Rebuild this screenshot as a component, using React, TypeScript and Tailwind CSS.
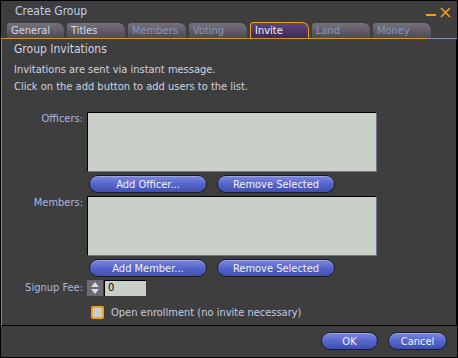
import React from "react";

const font = { fontFamily: '"DejaVu Sans Condensed", "DejaVu Sans", sans-serif' };

type TabProps = { label: string; active?: boolean; dim?: boolean; width: string };

const Tab = ({ label, active, dim, width }: TabProps) => {
  if (active) {
    return (
      <div
        className={`${width} h-[16px] rounded-tl-[3px] rounded-tr-[7px] border border-b-0 border-[#e0a020] bg-gradient-to-b from-[#5e4678] to-[#3e2a58] pl-[4px] text-[11px] leading-[15px] text-[#f0f0f0]`}
      >
        {label}
      </div>
    );
  }
  return (
    <div
      className={`${width} h-[15px] rounded-tl-[3px] rounded-tr-[7px] bg-gradient-to-b from-[#76717c] to-[#4e4a56] pl-[4px] text-[11px] leading-[15px] ${
        dim ? "text-[#8a96b8]" : "text-[#d4d8e4]"
      }`}
    >
      {label}
    </div>
  );
};

const Pill = ({ label, width }: { label: string; width: string }) => (
  <button
    className={`${width} h-[18px] rounded-full border border-[#1c1c28] bg-gradient-to-b from-[#7c88e0] via-[#5666cc] to-[#4050b0] text-center text-[11px] leading-[15px] text-[#f2f2f8] shadow-[inset_0_1px_0_rgba(255,255,255,0.25)]`}
  >
    {label}
  </button>
);

const ListBox = () => (
  <div className="h-[60px] w-[290px] border-l border-t border-black border-r-[#6a7890] border-b-[#6a7890] border-r border-b bg-[#c8d0c8]" />
);

export default function App() {
  return (
    <div style={font} className="h-[358px] w-[458px] overflow-hidden border border-black bg-[#3e3e3e] text-[11px]">
      {/* title bar */}
      <div className="flex h-[20px] items-center justify-between pl-[14px] pr-[6px]">
        <span className="text-[12px] text-[#c4cce8]">Create Group</span>
        <div className="flex items-center gap-[4px] pt-[3px]">
          <svg width="10" height="10" viewBox="0 0 10 10">
            <rect x="0" y="6" width="10" height="2" fill="#f0a020" />
          </svg>
          <svg width="11" height="11" viewBox="0 0 11 11">
            <path d="M1 1 L10 10 M10 1 L1 10" stroke="#f0a020" strokeWidth="1.6" />
          </svg>
        </div>
      </div>

      {/* tabs */}
      <div className="flex h-[17px] items-end gap-[3px] pl-[6px]">
        <Tab label="General" width="w-[57px]" />
        <Tab label="Titles" width="w-[58px]" />
        <Tab label="Members" width="w-[58px]" dim />
        <Tab label="Voting" width="w-[58px]" dim />
        <Tab label="Invite" active width="w-[59px]" />
        <Tab label="Land" width="w-[58px]" dim />
        <Tab label="Money" width="w-[58px]" dim />
      </div>
      <div className="flex h-[1px]">
        <div className="w-[426px] bg-[#d09a28]" />
        <div className="flex-1 bg-[#8a94ac]" />
      </div>

      {/* panel */}
      <div className="flex h-[287px] flex-col border-l border-l-[#7a88a8] border-r border-r-black border-b border-b-black pl-[12px] text-[#d0d4e0]">
        <div className="mt-[1px] text-[12px] leading-[18px]">Group Invitations</div>
        <div className="mt-[3px] leading-[17px]">Invitations are sent via instant message.</div>
        <div className="leading-[17px]">Click on the add button to add users to the list.</div>

        <div className="mt-[17px] flex gap-[4px]">
          <div className="w-[69px] text-right leading-[14px] text-[#aab8e0]">Officers:</div>
          <ListBox />
        </div>
        <div className="mt-[3px] flex gap-[10px] pl-[75px]">
          <Pill label="Add Officer..." width="w-[118px]" />
          <Pill label="Remove Selected" width="w-[118px]" />
        </div>

        <div className="mt-[3px] flex gap-[4px]">
          <div className="w-[69px] text-right leading-[14px] text-[#aab8e0]">Members:</div>
          <ListBox />
        </div>
        <div className="mt-[3px] flex gap-[10px] pl-[75px]">
          <Pill label="Add Member..." width="w-[118px]" />
          <Pill label="Remove Selected" width="w-[118px]" />
        </div>

        <div className="mt-[3px] flex items-center gap-[4px]">
          <div className="w-[69px] text-right text-[#aab8e0]">Signup Fee:</div>
          <div className="flex items-center gap-[1px]">
            <div className="flex h-[16px] w-[16px] flex-col justify-center gap-[2px] bg-[#6a6a72]">
              <svg width="16" height="6" viewBox="0 0 16 6">
                <path d="M4 6 L8 1 L12 6 Z" fill="#d8d8e0" />
              </svg>
              <svg width="16" height="6" viewBox="0 0 16 6">
                <path d="M4 0 L8 5 L12 0 Z" fill="#d8d8e0" />
              </svg>
            </div>
            <div className="h-[16px] w-[42px] border-l border-t border-black bg-[#c8d0c8] pl-[3px] text-[11px] leading-[14px] text-black">
              0
            </div>
          </div>
        </div>

        <div className="mt-[8px] flex items-center gap-[7px] pl-[77px]">
          <div className="h-[13px] w-[13px] rounded-[2px] border-2 border-[#f0a020] bg-[#c8ccd0]" />
          <span className="text-[#c4cce0]">Open enrollment (no invite necessary)</span>
        </div>
      </div>

      {/* footer */}
      <div className="flex justify-end gap-[10px] pr-[10px] pt-[6px]">
        <Pill label="OK" width="w-[57px]" />
        <Pill label="Cancel" width="w-[59px]" />
      </div>
    </div>
  );
}
